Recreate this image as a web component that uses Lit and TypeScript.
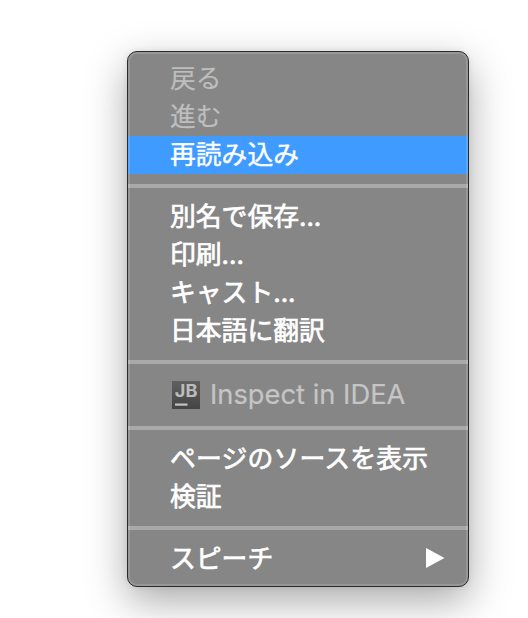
import { LitElement, html, css, svg } from "lit";
import { customElement, property } from "lit/decorators.js";

@customElement("menu-item")
class MenuItem extends LitElement {
  @property() label = "";
  @property() suffix = "";
  @property({ type: Boolean, reflect: true }) disabled = false;
  @property({ type: Boolean, reflect: true }) active = false;
  @property({ type: Boolean, reflect: true }) latin = false;
  @property({ type: Boolean }) submenu = false;

  static styles = css`
    :host {
      display: flex;
      align-items: center;
      height: 38px;
      padding: 0 23px 0 42px;
      box-sizing: border-box;
      color: #fff;
      font: 400 25.8px/38px Inter, "Noto Sans CJK JP", sans-serif;
      -webkit-text-stroke: 0.7px currentColor;
      white-space: nowrap;
    }
    :host([active]) {
      background: #3f9bff;
      -webkit-text-stroke-width: 0.4px;
    }
    :host([disabled]) {
      color: #bebebe;
      -webkit-text-stroke-width: 0.2px;
    }
    :host([latin]) {
      height: 42px;
      font-size: 27.3px;
      line-height: 42px;
      color: #c5c5c5;
    }
    .label {
      flex: 1;
    }
    .arrow {
      display: block;
      width: 19px;
      height: 20px;
      margin-bottom: 2px;
    }
  `;

  render() {
    return html`<slot></slot><span class="label">${this.label}${this.suffix}</span>
      ${this.submenu
        ? html`<svg class="arrow" viewBox="0 0 19 20">
            ${svg`<path d="M0 0L18.5 10L0 20Z" fill="#fff"></path>`}
          </svg>`
        : ""}`;
  }
}

@customElement("app-root")
class AppRoot extends LitElement {
  static styles = css`
    :host {
      display: block;
      height: 618px;
      box-sizing: border-box;
      padding: 51px 0 0 127px;
      background: #fff;
      overflow: hidden;
    }
    .menu {
      position: relative;
      width: 342px;
      box-sizing: border-box;
      padding: 8px 0;
      border: 1px solid #2b2b2b;
      border-radius: 10px;
      background: #868686;
      box-shadow: 0 14px 40px rgba(0, 0, 0, 0.34), 0 0 6px rgba(0, 0, 0, 0.08);
    }
    .menu::after {
      content: "";
      position: absolute;
      inset: 0;
      border: 2px solid rgba(255, 255, 255, 0.14);
      border-radius: 9px;
      pointer-events: none;
    }
    .separator {
      height: 4px;
      margin: 10px 0;
      background: #a9a9a9;
    }
    .logo {
      width: 28px;
      height: 28px;
      margin: 0 10px 0 2px;
      flex: none;
    }
    .wide {
      letter-spacing: 0.2px;
    }
  `;

  render() {
    return html`<div class="menu">
      <menu-item label="戻る" disabled></menu-item>
      <menu-item label="進む" disabled></menu-item>
      <menu-item label="再読み込み" active></menu-item>
      <div class="separator"></div>
      <menu-item label="別名で保存" suffix="..."></menu-item>
      <menu-item label="印刷" suffix="..."></menu-item>
      <menu-item label="キャスト" suffix="..."></menu-item>
      <menu-item label="日本語に翻訳"></menu-item>
      <div class="separator"></div>
      <menu-item label="Inspect in IDEA" disabled latin>
        <svg class="logo" viewBox="0 0 28 28">
          <defs>
            <linearGradient id="tile" x1="0" y1="0" x2="0" y2="1">
              <stop offset="0" stop-color="#606060"></stop>
              <stop offset="1" stop-color="#444"></stop>
            </linearGradient>
          </defs>
          <rect width="28" height="28" fill="url(#tile)"></rect>
          <text x="2.8" y="15.8" textLength="22.6" lengthAdjust="spacingAndGlyphs" font-family="Inter, sans-serif" font-size="17" font-weight="700" fill="#bcbcbc" stroke="none">JB</text>
          <rect x="3" y="22.5" width="12.5" height="2.2" fill="#c2c2c2"></rect>
        </svg>
      </menu-item>
      <div class="separator"></div>
      <menu-item class="wide" label="ページのソースを表示"></menu-item>
      <menu-item label="検証"></menu-item>
      <div class="separator"></div>
      <menu-item label="スピーチ" submenu></menu-item>
    </div>`;
  }
}
